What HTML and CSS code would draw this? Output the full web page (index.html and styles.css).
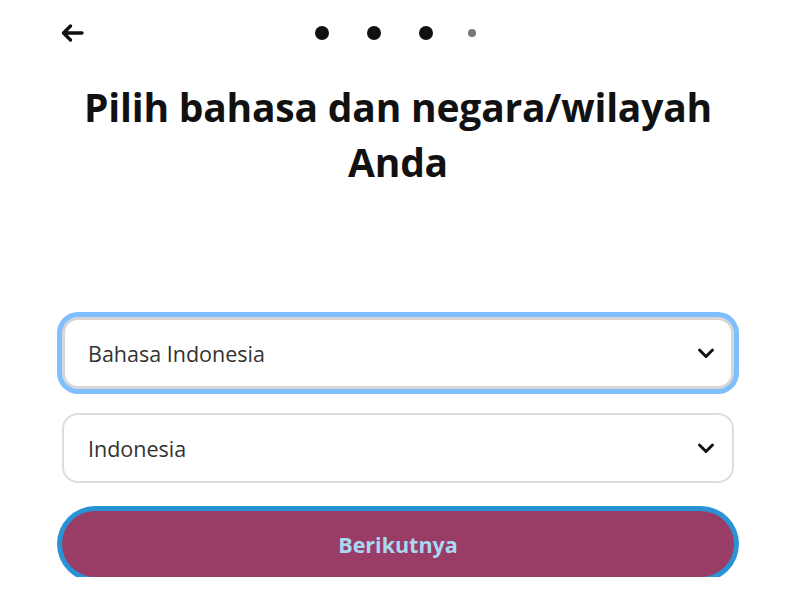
FILE: index.html
```html
<!DOCTYPE html>
<html lang="id">
<head>
  <meta charset="UTF-8">
  <meta name="viewport" content="width=device-width, initial-scale=1.0">
  <title>Pilih bahasa dan negara/wilayah</title>
  <link rel="stylesheet" href="styles.css">
</head>
<body>
  <div class="page">
    <header class="top">
      <button class="back" aria-label="Kembali">
        <svg width="24" height="20" viewBox="0 0 24 20">
          <path d="M22 10H3.5M10.5 3L3.5 10l7 7" fill="none" stroke="#111" stroke-width="3.4" stroke-linecap="round" stroke-linejoin="round"/>
        </svg>
      </button>
      <div class="steps">
        <span class="dot"></span>
        <span class="dot"></span>
        <span class="dot"></span>
        <span class="dot small"></span>
      </div>
    </header>

    <h1 class="title">Pilih bahasa dan negara/wilayah Anda</h1>

    <form class="form">
      <div class="field focused">
        <select>
          <option>Bahasa Indonesia</option>
          <option>English (US)</option>
        </select>
        <svg class="chevron" width="18" height="12" viewBox="0 0 18 12">
          <path d="M2.5 3l6.5 6.5L15.5 3" fill="none" stroke="#111" stroke-width="3" stroke-linecap="round" stroke-linejoin="round"/>
        </svg>
      </div>
      <div class="field">
        <select>
          <option>Indonesia</option>
          <option>Malaysia</option>
        </select>
        <svg class="chevron" width="18" height="12" viewBox="0 0 18 12">
          <path d="M2.5 3l6.5 6.5L15.5 3" fill="none" stroke="#111" stroke-width="3" stroke-linecap="round" stroke-linejoin="round"/>
        </svg>
      </div>
      <button type="button" class="next">Berikutnya</button>
    </form>
  </div>
</body>
</html>
```

FILE: styles.css
```css
* { margin: 0; padding: 0; box-sizing: border-box; }
body {
  font-family: "Open Sans", "Noto Sans", sans-serif;
  background: #fff;
  color: #111;
}
.page {
  width: 672px;
  margin-left: 62px;
  display: flex;
  flex-direction: column;
}
.top {
  height: 66px;
  display: flex;
  align-items: center;
  position: relative;
}
.back {
  border: none;
  background: none;
  display: flex;
  margin-left: -2px;
  cursor: pointer;
}
.steps {
  position: absolute;
  left: 253px;
  top: 26px;
  display: flex;
  align-items: center;
  gap: 38px;
}
.dot {
  width: 14px;
  height: 14px;
  border-radius: 50%;
  background: #111;
}
.dot.small {
  width: 8px;
  height: 8px;
  background: #767676;
  margin-left: -3px;
}
.title {
  margin-top: 13px;
  padding: 0 10px;
  text-align: center;
  font-size: 39px;
  line-height: 55px;
  font-weight: 700;
  letter-spacing: -0.2px;
}
.form {
  margin-top: 128px;
  display: flex;
  flex-direction: column;
  gap: 24px;
}
.field {
  position: relative;
  height: 70px;
}
.field.focused {
  height: 72px;
}
.field select {
  appearance: none;
  width: 100%;
  height: 100%;
  border: 2px solid #ddd;
  border-radius: 16px;
  background: #fff;
  padding: 0 24px;
  font-family: inherit;
  font-size: 21.5px;
  color: #333;
  outline: none;
}
.field.focused select {
  border-color: #d6d6d6;
  border-width: 3px;
  padding-left: 23px;
  box-shadow: 0 0 0 5px #7fbfff;
}
.chevron {
  position: absolute;
  right: 19px;
  top: 29px;
  pointer-events: none;
}
.field.focused .chevron {
  top: 30px;
}
.next {
  margin-top: 4px;
  height: 66px;
  border: none;
  border-radius: 33px;
  background: #993c66;
  box-shadow: 0 0 0 5px #2a93d6;
  color: #a9d9f2;
  font-family: inherit;
  font-size: 21.5px;
  font-weight: 700;
  cursor: pointer;
}
```
